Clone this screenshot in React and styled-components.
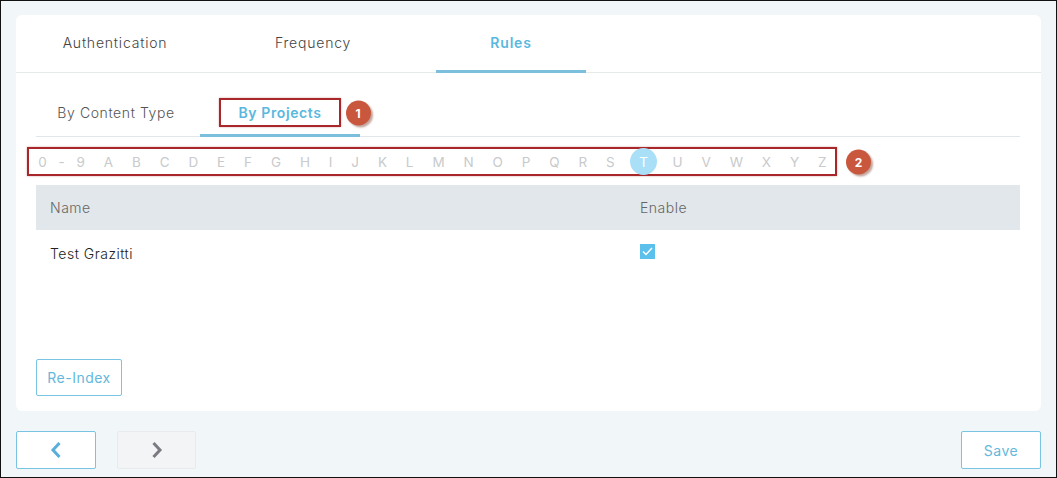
import React from 'react';
import styled, { createGlobalStyle } from 'styled-components';

const GlobalStyle = createGlobalStyle`
  html, body {
    margin: 0;
    padding: 0;
    background: #f1f7f8;
    font-family: "Inter", "Open Sans", sans-serif;
  }
  #root {
    width: 1057px;
    height: 478px;
    box-sizing: border-box;
    border: 1px solid #111;
    background: #f1f7f8;
    display: flex;
    flex-direction: column;
  }
`;

const Card = styled.div`
  margin: 14px 15px 0;
  height: 396px;
  background: #fff;
  border-radius: 6px;
  display: flex;
  flex-direction: column;
`;

const TabBar = styled.div`
  display: flex;
  gap: 48px;
  padding-left: 24px;
  height: 57px;
  border-bottom: 1px solid #e6eaeb;
`;

const Tab = styled.div`
  width: 150px;
  display: flex;
  align-items: center;
  justify-content: center;
  font-size: 14px;
  letter-spacing: 0.8px;
  font-weight: ${({ active }) => (active ? 600 : 300)};
  color: ${({ active }) => (active ? '#5ab8de' : '#444')};
  border-bottom: 3px solid ${({ active }) => (active ? '#7bbfdc' : 'transparent')};
  margin-bottom: -1px;
`;

const Body = styled.div`
  flex: 1;
  display: flex;
  flex-direction: column;
  padding: 0 21px 0 20px;
`;

const SubTabs = styled.div`
  display: flex;
  gap: 4px;
  height: 63px;
  border-bottom: 1px solid #e3e6e8;
`;

const SubTab = styled.div`
  position: relative;
  width: 160px;
  box-sizing: border-box;
  padding-top: 18px;
  display: flex;
  align-items: center;
  justify-content: center;
  font-size: 14px;
  letter-spacing: 0.6px;
  font-weight: ${({ active }) => (active ? 600 : 300)};
  color: ${({ active }) => (active ? '#5ab8de' : '#555')};
  border-bottom: 3px solid ${({ active }) => (active ? '#7bbfdc' : 'transparent')};
  margin-bottom: -1px;
`;

const Marked = styled.span`
  position: relative;
  display: inline-block;
  padding: 0 17px;
  line-height: 25px;
  border: 2px solid #a8272b;
  box-shadow: 0 0 2px rgba(168, 39, 43, 0.4);
`;

const Badge = styled.span`
  position: absolute;
  left: calc(100% + ${({ gap }) => gap}px);
  top: 50%;
  transform: translateY(-50%);
  width: 25px;
  height: 25px;
  border-radius: 50%;
  background: #c9573e;
  color: #fff;
  font-size: 12px;
  font-weight: 700;
  letter-spacing: 0;
  display: flex;
  align-items: center;
  justify-content: center;
  box-shadow: 2px 2px 2px rgba(120, 60, 40, 0.45);
`;

const AlphaBox = styled.div`
  position: relative;
  margin: 10px 0 0 -9px;
  width: 810px;
  height: 29px;
  box-sizing: border-box;
  border: 2px solid #a8272b;
  box-shadow: 0 0 2px rgba(168, 39, 43, 0.4);
  display: flex;
  align-items: center;
  padding-left: 0;
`;

const Letter = styled.span`
  flex-shrink: 0;
  white-space: nowrap;
  display: flex;
  align-items: center;
  justify-content: center;
  height: 27px;
  min-width: ${({ active }) => (active ? '27px' : 'auto')};
  padding: 0 ${({ active }) => (active ? '0' : '9.2px')};
  margin: 0 ${({ active }) => (active ? '6px' : '0')};
  border-radius: 50%;
  font-size: 13.5px;
  letter-spacing: 0.5px;
  word-spacing: 7px;
  font-weight: 400;
  color: ${({ active }) => (active ? '#fff' : '#c8cacc')};
  background: ${({ active }) => (active ? '#aadff8' : 'transparent')};
`;

const Table = styled.div`
  margin-top: 9px;
  display: flex;
  flex-direction: column;
`;

const Row = styled.div`
  display: grid;
  grid-template-columns: 590px 1fr;
  align-items: center;
  padding: 0 14px;
  height: ${({ head }) => (head ? '45px' : '47px')};
  background: ${({ head }) => (head ? '#e1e7ea' : '#fff')};
  font-size: 14px;
  letter-spacing: 0.5px;
  font-weight: 300;
  color: ${({ head }) => (head ? '#666' : '#222')};
`;

const Check = styled.span`
  width: 15px;
  height: 15px;
  margin-top: -5px;
  background: #5bc0ec;
  display: flex;
  align-items: center;
  justify-content: center;
`;

const OutlineButton = styled.button`
  font-family: inherit;
  background: ${({ muted }) => (muted ? '#f2f4f5' : '#fff')};
  border: 1px solid ${({ muted }) => (muted ? '#e8eaec' : '#78c4e2')};
  border-radius: 2px;
  color: #64b8dc;
  font-size: 14px;
  letter-spacing: 0.5px;
  width: ${({ w }) => w}px;
  height: ${({ h }) => h}px;
  padding: 0;
  display: flex;
  align-items: center;
  justify-content: center;
`;

const Footer = styled.div`
  margin-top: auto;
  margin-bottom: 15px;
`;

const BottomBar = styled.div`
  display: flex;
  align-items: center;
  gap: 21px;
  padding: 0 15px;
  margin-top: 20px;
`;

const Spacer = styled.div`
  flex: 1;
`;

const letters = ['0 - 9', ...'ABCDEFGHIJKLMNOPQRSTUVWXYZ'.split('')];

const Chevron = ({ dir, color }) => (
  <svg width="12" height="18" viewBox="0 0 12 18">
    <path
      d={dir === 'left' ? 'M9.5 2 L3 9 L9.5 16' : 'M2.5 2 L9 9 L2.5 16'}
      fill="none"
      stroke={color}
      strokeWidth="3"
      strokeLinejoin="miter"
    />
  </svg>
);

export default function App() {
  return (
    <>
      <GlobalStyle />
      <Card>
        <TabBar>
          <Tab>Authentication</Tab>
          <Tab>Frequency</Tab>
          <Tab active>Rules</Tab>
        </TabBar>
        <Body>
          <SubTabs>
            <SubTab>By Content Type</SubTab>
            <SubTab active>
              <Marked>
                By Projects
                <Badge gap={7}>1</Badge>
              </Marked>
            </SubTab>
          </SubTabs>

          <AlphaBox>
            {letters.map((l) => (
              <Letter key={l} active={l === 'T'}>{l}</Letter>
            ))}
            <Badge gap={11}>2</Badge>
          </AlphaBox>

          <Table>
            <Row head>
              <span>Name</span>
              <span>Enable</span>
            </Row>
            <Row>
              <span>Test Grazitti</span>
              <Check>
                <svg width="11" height="9" viewBox="0 0 11 9">
                  <path d="M1 4.5 L4 7.5 L10 1" fill="none" stroke="#fff" strokeWidth="1.5" />
                </svg>
              </Check>
            </Row>
          </Table>

          <Footer>
            <OutlineButton w={86} h={37}>Re-Index</OutlineButton>
          </Footer>
        </Body>
      </Card>
      <BottomBar>
        <OutlineButton w={80} h={38}>
          <Chevron dir="left" color="#5aaedb" />
        </OutlineButton>
        <OutlineButton w={79} h={38} muted>
          <Chevron dir="right" color="#7a7a80" />
        </OutlineButton>
        <Spacer />
        <OutlineButton w={80} h={38}>Save</OutlineButton>
      </BottomBar>
    </>
  );
}
